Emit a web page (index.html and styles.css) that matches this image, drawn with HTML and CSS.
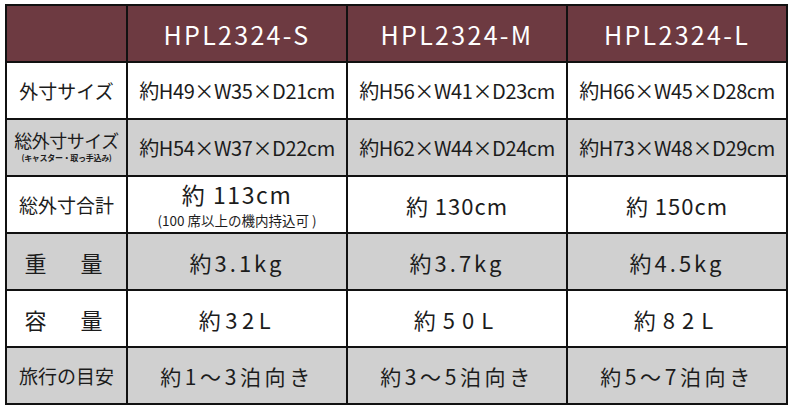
FILE: index.html
```html
<!DOCTYPE html>
<html lang="ja">
<head>
<meta charset="utf-8">
<link rel="stylesheet" href="styles.css">
</head>
<body>
<table class="spec">
  <colgroup>
    <col class="c-label"><col class="c-val"><col class="c-val"><col class="c-val">
  </colgroup>
  <thead>
    <tr class="head">
      <th></th>
      <th>HPL2324-S</th>
      <th>HPL2324-M</th>
      <th>HPL2324-L</th>
    </tr>
  </thead>
  <tbody>
    <tr class="white">
      <th class="lbl">外寸サイズ</th>
      <td class="dim">約H49×W35×D21cm</td>
      <td class="dim">約H56×W41×D23cm</td>
      <td class="dim">約H66×W45×D28cm</td>
    </tr>
    <tr class="gray">
      <th class="lbl lbl-two"><span class="lbl-main">総外寸サイズ</span><span class="lbl-sub">(キャスター・取っ手込み)</span></th>
      <td class="dim">約H54×W37×D22cm</td>
      <td class="dim">約H62×W44×D24cm</td>
      <td class="dim">約H73×W48×D29cm</td>
    </tr>
    <tr class="white">
      <th class="lbl">総外寸合計</th>
      <td class="total"><span class="total-main">約 113cm</span><span class="total-sub">(100 席以上の機内持込可 )</span></td>
      <td class="total">約 130cm</td>
      <td class="total">約 150cm</td>
    </tr>
    <tr class="gray">
      <th class="lbl lbl-wide">重　量</th>
      <td class="big">約3.1kg</td>
      <td class="big">約3.7kg</td>
      <td class="big">約4.5kg</td>
    </tr>
    <tr class="white">
      <th class="lbl lbl-wide">容　量</th>
      <td class="big mid">約32L</td>
      <td class="big spread">約50L</td>
      <td class="big spread">約82L</td>
    </tr>
    <tr class="gray">
      <th class="lbl">旅行の目安</th>
      <td class="trip">約1～3泊向き</td>
      <td class="trip">約3～5泊向き</td>
      <td class="trip">約5～7泊向き</td>
    </tr>
  </tbody>
</table>
</body>
</html>
```

FILE: styles.css
```css
html, body {
  margin: 0;
  padding: 0;
  background: #ffffff;
}
body {
  padding: 4px 0 0 5px;
  font-family: "Noto Sans CJK JP", "Noto Sans", sans-serif;
  color: #1c1c1c;
}
.spec {
  border-collapse: collapse;
  table-layout: fixed;
  width: 781px;
  border: 2px solid #111111;
}
.c-label { width: 121px; }
.c-val { width: 220px; }
.spec th, .spec td {
  border: 2px solid #111111;
  padding: 0;
  text-align: center;
  vertical-align: middle;
  font-weight: 400;
  white-space: nowrap;
}
.head th {
  background: #6d3a41;
  color: #ffffff;
  height: 55px;
  font-family: "Noto Sans CJK JP", sans-serif;
  font-size: 25px;
  letter-spacing: 2.3px;
  font-weight: 400;
}
tbody tr { height: 57px; }
tr.white th, tr.white td { background: #ffffff; }
tr.gray th, tr.gray td { background: #d0d0d0; }
.lbl {
  font-size: 19px;
  letter-spacing: 0;
}
.lbl-main {
  display: block;
  font-size: 18px;
  line-height: 24px;
  letter-spacing: -0.5px;
  margin-top: -4px;
}
.lbl-sub {
  display: block;
  font-size: 8px;
  line-height: 12px;
  font-weight: 700;
  letter-spacing: -0.3px;
}
.lbl-wide {
  font-size: 22px;
  letter-spacing: 6px;
  padding-left: 4px;
}
.dim {
  font-size: 20px;
  letter-spacing: -0.4px;
}
.total {
  font-size: 22px;
  letter-spacing: 1px;
}
.total-main {
  display: block;
  font-size: 23px;
  line-height: 30px;
  letter-spacing: 1.6px;
  margin-top: -2px;
}
.total-sub {
  display: block;
  font-size: 13.5px;
  line-height: 18px;
  letter-spacing: 0;
  margin-top: 2px;
}
.big {
  font-size: 22px;
  letter-spacing: 3px;
  padding-left: 3px;
}
.mid {
  letter-spacing: 4.5px;
  padding-left: 4.5px;
}
.spread {
  letter-spacing: 7px;
  padding-left: 7px;
}
.trip {
  font-size: 21px;
  letter-spacing: 3.6px;
  padding-left: 3.6px;
}
```
